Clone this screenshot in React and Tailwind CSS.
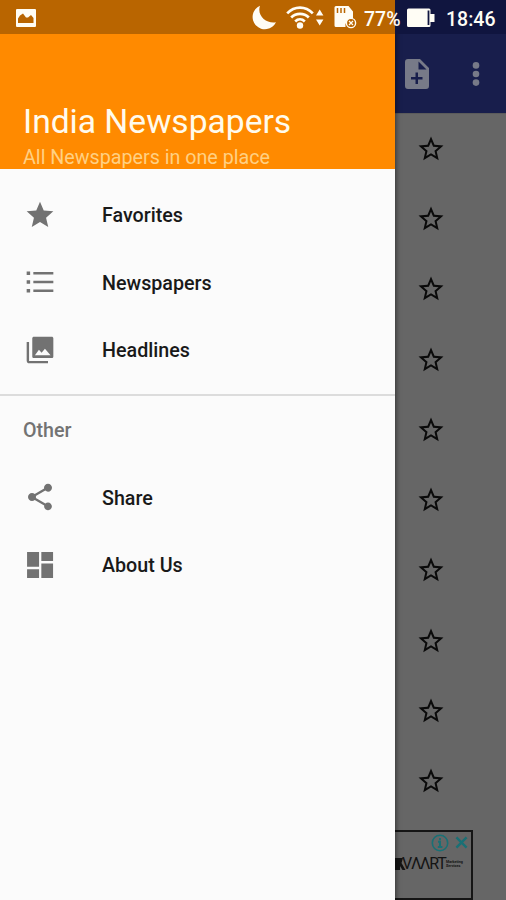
import React from "react";

const ICONS = {
  star: "M12 17.27 18.18 21l-1.64-7.03L22 9.24l-7.19-.61L12 2 9.19 8.63 2 9.24l5.46 4.73L5.82 21z",
  list: "M2 4.1h2.6v2.6H2zM2 10.7h2.6v2.6H2zM2 17.3h2.6v2.6H2zM7 4.5h15v1.8H7zM7 11.1h15v1.8H7zM7 17.7h15v1.8H7z",
  photos: "M22 16V3.200c0-.700-.5-1.200-1.200-1.200H7.500c-.8 0-1.300.5-1.300 1.200v13.600c0 .7.5 1.200 1.300 1.200h13.300c.7 0 1.200-.5 1.200-1.200zm-13.800 0l3-4.200 2 2.300 2.500-3.100 4.200 5zM2 6v14c0 1.100.9 2 2 2h14v-1.800H3.800V6H2z",
  share: "M18 16.080c-.76 0-1.440.3-1.960.770L8.910 12.700c.050-.230.090-.460.090-.700s-.040-.470-.090-.700l7.050-4.110c.540.500 1.250.810 2.040.810 1.660 0 3-1.340 3-3s-1.340-3-3-3-3 1.340-3 3c0 .240.040.470.090.700L8.040 9.810C7.500 9.310 6.790 9 6 9c-1.660 0-3 1.340-3 3s1.340 3 3 3c.790 0 1.500-.310 2.040-.810l7.120 4.160c-.050.210-.080.430-.080.650 0 1.610 1.310 2.920 2.920 2.920s2.920-1.310 2.920-2.920-1.310-2.920-2.920-2.920z",
  dashboard: "M2.300 2.300h9v11h-9zM2.300 15.200h9v6.500h-9zM13 10.900h8.800v10.800H13zM13 2.300h8.800v6.700H13z",
  starBorder: "M22 9.240l-7.190-.620L12 2 9.190 8.630 2 9.240l5.460 4.730L5.820 21 12 17.270 18.180 21l-1.630-7.030L22 9.240zM12 15.400l-3.760 2.270 1-4.280-3.320-2.880 4.380-.380L12 6.100l1.710 4.040 4.380.380-3.320 2.880 1 4.280L12 15.400z",
};

function Icon({ name, className }) {
  return (
    <svg viewBox="0 0 24 24" className={className} fill="currentColor">
      <path d={ICONS[name]} />
    </svg>
  );
}

function MenuItem({ icon, label }) {
  return (
    <div className="flex h-[67.5px] items-center pl-6">
      <Icon name={icon} className="size-8 shrink-0 text-[#727272]" />
      <span className="ml-[46px] pt-[3px] text-[19.700px] font-medium leading-6 text-[#191919]">{label}</span>
    </div>
  );
}

function StatusBar() {
  return (
    <div className="absolute inset-x-0 top-0 z-20 flex h-[34px] text-[#fffdf5]">
      <div className="h-full w-[395px] bg-[#b96500]" />
      <div className="h-full flex-1 bg-[#10153f]" />
      <svg className="absolute inset-0" width="506" height="34" fill="currentColor">
        <path fillRule="evenodd" d="M17 9h18a1 1 0 0 1 1 1v16a1 1 0 0 1-1 1H17a1 1 0 0 1-1-1V10a1 1 0 0 1 1-1zM18 23h15.500v-5l-2.500-3-3 2.500h-2l-3-4-3 2-2 3z" />
        <path d="M260 5.700A12.300 12.300 0 1 0 276 22.300C267 24.200 256.500 16 260 5.700z" />
        <g fill="none" stroke="currentColor" strokeWidth="2.700">
          <path d="M287.200 13.400C294.500 5.800 305.500 5.800 312.800 13.400" />
          <path d="M291.200 17.500C296 12.700 304 12.700 308.800 17.500" />
          <path d="M295.200 21.500C298 18.800 302 18.800 304.800 21.500" />
        </g>
        <circle cx="300" cy="25.500" r="3.200" />
        <path d="M316 15.500l3.700-6 3.700 6zM316 19.500h7.400l-3.700 6z" />
        <path d="M336 6h12.500l4.500 5.500V19a6.800 6.800 0 0 0-7.500 8h-9.500a1.500 1.500 0 0 1-1.500-1.500v-18A1.500 1.500 0 0 1 336 6z" />
        <path d="M337.500 8v5M341 8v5M344.500 8v5" stroke="#b96500" strokeWidth="1.500" />
        <circle cx="351" cy="23" r="4.600" fill="#b96500" stroke="currentColor" strokeWidth="1.400" />
        <path d="M349 21l4 4M353 21l-4 4" stroke="currentColor" strokeWidth="1.300" />
        <path d="M408.500 8.500h20.500a1.500 1.500 0 0 1 1.500 1.500v4h4v8h-4v3.500a1.500 1.500 0 0 1-1.500 1.500h-20.500a1.500 1.500 0 0 1-1.500-1.500V10a1.500 1.500 0 0 1 1.500-1.500z" />
        <path d="M428.500 10.500v14.500" stroke="#10153f" strokeWidth="1.800" />
      </svg>
      <span className="absolute left-[364px] top-2 text-[19.500px] font-medium leading-6">77%</span>
      <span className="absolute left-[446px] top-2 text-[19.500px] font-medium leading-6">18:46</span>
    </div>
  );
}

function Drawer() {
  return (
    <aside className="relative z-10 flex h-full w-[395px] shrink-0 flex-col bg-[#fbfbfb] shadow-[0_0_5px_1px_rgba(0,0,0,0.5)]">
      <header className="flex h-[169px] shrink-0 flex-col justify-end bg-[#ff8a00] pl-[23px]">
        <h1 className="text-[33.6px] font-normal leading-10 text-[#fffbed]">India Newspapers</h1>
        <p className="mt-1 h-[23px] text-[19.7px] leading-6 text-[#ffd083]">All Newspapers in one place</p>
      </header>
      <nav className="pt-3">
        <MenuItem icon="star" label="Favorites" />
        <MenuItem icon="list" label="Newspapers" />
        <MenuItem icon="photos" label="Headlines" />
      </nav>
      <nav className="mt-[10.5px] border-t-2 border-[#dcdcdc]">
        <h2 className="flex h-[67.5px] items-center pl-[23px] pt-[3px] text-[19.700px] font-medium leading-6 text-[#737373]">Other</h2>
        <MenuItem icon="share" label="Share" />
        <MenuItem icon="dashboard" label="About Us" />
      </nav>
    </aside>
  );
}

function AdBanner() {
  return (
    <div className="-ml-1 flex h-[70px] w-[82px] shrink-0 flex-col border-2 border-[#151515]">
      <div className="flex h-[21px] items-center justify-end gap-[6px] pr-[3px] text-[#1a7075]">
        <svg width="18" height="18" viewBox="0 0 18 18" fill="none" stroke="currentColor" strokeWidth="1.600">
          <circle cx="9" cy="9" r="7.700" />
          <path d="M9 4v2.200M7 7.800h2v5M6.800 13h4.600" strokeWidth="2" />
        </svg>
        <svg width="13" height="13" viewBox="0 0 14 14" stroke="currentColor" strokeWidth="2.600">
          <path d="M1.500 1.500l11 11M12.500 1.500l-11 11" />
        </svg>
      </div>
      <div className="flex h-[22px] items-center text-[#141414]">
        <svg width="13" height="12" viewBox="0 0 13 12" className="shrink-0">
          <path d="M0 0h10L8.500 5l4 7H9.500L7 8v4H0z" fill="currentColor" />
        </svg>
        <span className="-ml-[4px] w-[42px] whitespace-nowrap text-[16px] leading-5 tracking-[-1.300px]">VΛΛRT</span>
        <span className="ml-[2px] whitespace-nowrap text-[3.700px] font-bold leading-[4px]">Marketing<br />Services</span>
      </div>
    </div>
  );
}

function Page() {
  return (
    <main className="flex h-full flex-1 flex-col bg-[#666666]">
      <div className="flex h-[113px] shrink-0 items-end bg-[#181e4c] text-[#777a88]">
        <div className="flex h-[79px] w-full items-center">
          <svg width="24" height="30" viewBox="0 0 24 30" className="ml-[10px]">
            <path fillRule="evenodd" fill="currentColor" d="M3 0h12l9 9v18a3 3 0 0 1-3 3H3a3 3 0 0 1-3-3V3a3 3 0 0 1 3-3zM13.500 2.500v8h8zM10.500 13.500v4.500H6v2.500h4.500V25H13v-4.500h4.500V18H13v-4.500z" />
          </svg>
          <svg width="8" height="24" viewBox="0 0 8 24" className="ml-[43px]" fill="currentColor">
            <circle cx="4" cy="3.400" r="3.300" />
            <circle cx="4" cy="12" r="3.300" />
            <circle cx="4" cy="20.600" r="3.300" />
          </svg>
        </div>
      </div>
      <div className="flex h-[717px] shrink-0 flex-col border-t border-[#5b5b5b]">
        {Array.from({ length: 10 }, (_, i) => (
          <div key={i} className="flex h-[70.3px] shrink-0 items-center pb-px pl-[21px]">
            <Icon name="starBorder" className="size-[30px] text-[#0a0a0a]" />
          </div>
        ))}
      </div>
      <AdBanner />
    </main>
  );
}

export default function App() {
  return (
    <div className="relative flex h-[900px] w-[506px] overflow-hidden font-['Roboto',sans-serif]">
      <Drawer />
      <Page />
      <StatusBar />
    </div>
  );
}
